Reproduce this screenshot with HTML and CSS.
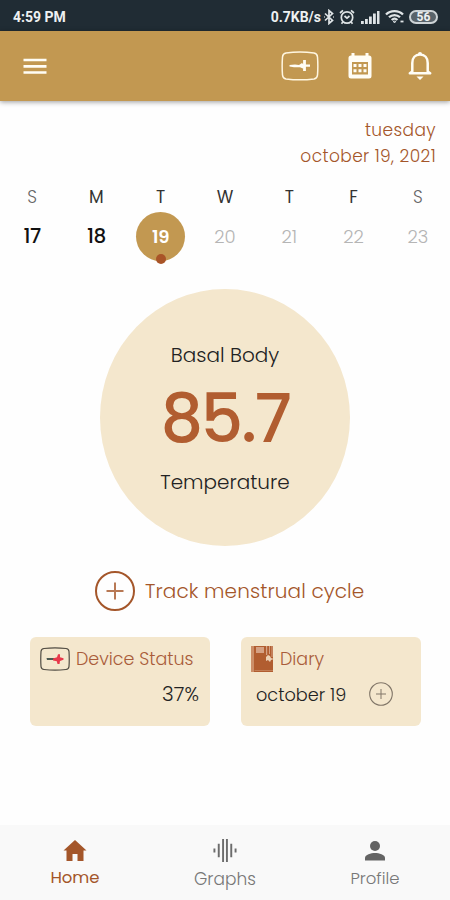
FILE: index.html
```html
<!DOCTYPE html>
<html lang="en">
<head>
    <meta charset="UTF-8">
    <meta name="viewport" content="width=device-width, initial-scale=1.0">
    <title>Basal Body Temperature</title>
    <link rel="stylesheet" href="styles.css">
</head>
<body>
    <!-- Phone status bar -->
    <div class="status-bar">
        <span class="clock">4:59 PM</span>
        <span class="net-speed">0.7KB/s</span>
        <svg class="status-icon" width="12" height="16" viewBox="0 0 12 16" fill="none" stroke="#dfe4e6" stroke-width="1.700"><path d="M2 4.500l7.500 7L6 14.500v-13l3.500 3-7.500 7"/><path d="M1 8h.8M10.200 8h.8"/></svg>
        <svg class="status-icon alarm" width="16" height="16" viewBox="0 0 16 16" fill="none" stroke="#dfe4e6" stroke-width="1.700"><circle cx="8" cy="8.500" r="5.700"/><path d="M1 4l3-2.700M15 4l-3-2.700M5.500 7L8 9.200 10.500 7M3.800 13l-1.300 1.700M12.200 13l1.300 1.700"/></svg>
        <svg class="status-icon signal" width="19" height="14" viewBox="0 0 19 14" fill="#dfe4e6"><path d="M0 11h2.800v3H0zM4 9h2.800v5H4zM8 6.500h2.800V14H8zM12 3.500h2.800V14H12zM16 1h2.500v13H16z"/></svg>
        <svg class="status-icon wifi" width="20" height="15" viewBox="0 0 20 15" fill="none" stroke="#dfe4e6" stroke-width="2.300"><path d="M1 5.500c4.500-4.500 12.500-4.500 17 0M4 8.300c3-3 8-3 11 0M6.700 11c1.700-1.600 4-1.600 5.700 0"/><path d="M8.300 12.200h2.500L9.500 14z" stroke-width="1"/><path d="M15.500 12.500h3" stroke-width="1.800"/></svg>
        <span class="battery">56</span>
    </div>

    <header class="app-bar">
        <svg class="menu-icon" width="24" height="18" viewBox="0 0 24 18" stroke="#fffdf5" stroke-width="2.700"><path d="M.5 3h23M.5 9.300h23M.5 15.500h23"/></svg>
        <div class="actions">
            <svg width="38" height="30" viewBox="0 0 38 30" fill="none"><path d="M5 2Q19 .2 33 2q3.200.5 3.500 4 .7 9 0 18-.3 3.500-3.500 4-14 1.700-28 0-3.200-.5-3.500-4-.7-9 0-18Q1.800 2.500 5 2z" stroke="#fff6e0" stroke-width="1.500"/><path d="M8.500 14l5.500-.5 4 .5 3-2 1.500 1.500H29v2.300h-5.500L22 17.500l-3-1.300h-6l-4.500-.7z" fill="#fffdf5"/><path d="M23.500 9v11" stroke="#fffdf5" stroke-width="2.800"/></svg>
            <svg class="calendar-icon" width="24" height="26" viewBox="0 0 24 26"><path fill="#fffdf5" fill-rule="evenodd" d="M3.500 0h3v2.500h11V0h3v2.500H21a2.500 2.500 0 0 1 2.500 2.500v18a2.500 2.500 0 0 1-2.500 2.500H3A2.500 2.500 0 0 1 .5 23V5A2.500 2.500 0 0 1 3 2.500h.5zM4 9v12.500h16V9z"/><path fill="#fffdf5" d="M5.500 11h3v3h-3zM10.500 11h3v3h-3zM15.500 11h3v3h-3zM5.500 16.300h3v3h-3zM10.500 16.300h3v3h-3zM15.500 16.300h3v3h-3z"/></svg>
            <svg class="bell-icon" width="26" height="30" viewBox="0 0 26 30" fill="none"><path d="M5.300 20.500V12c0-5 3-8.500 7.700-8.500s7.700 3.500 7.700 8.500v8.500l2.500 1.700H2.800z" stroke="#fffdf5" stroke-width="2.500" stroke-linejoin="round"/><path d="M11 3a2 2 0 0 1 4 0zM9.500 25.500h7L13 29z" fill="#fffdf5"/></svg>
        </div>
    </header>

    <main>
        <div class="today">
            <div class="today-day">tuesday</div>
            <div class="today-date">october 19, 2021</div>
        </div>

        <!-- Week strip -->
        <div class="week">
            <div class="day past"><span class="name light">S</span><span class="number">17</span></div>
            <div class="day past"><span class="name">M</span><span class="number">18</span></div>
            <div class="day selected"><span class="name">T</span><span class="number">19</span></div>
            <div class="day"><span class="name">W</span><span class="number">20</span></div>
            <div class="day"><span class="name">T</span><span class="number">21</span></div>
            <div class="day"><span class="name">F</span><span class="number">22</span></div>
            <div class="day"><span class="name light">S</span><span class="number">23</span></div>
        </div>

        <div class="temperature">
            <span class="label-top">Basal Body</span>
            <span class="value">85.7</span>
            <span class="label-bottom">Temperature</span>
        </div>

        <div class="track">
            <svg width="40" height="40" viewBox="0 0 40 40" fill="none"><circle cx="20" cy="20" r="19" stroke="#a4562a" stroke-width="2"/><path d="M20 11.500v17M11.500 20h17" stroke="#b87955" stroke-width="2"/></svg>
            <span class="track-text">Track menstrual cycle</span>
        </div>

        <div class="cards">
            <div class="card">
                <div class="card-title device">
                    <svg width="30" height="24" viewBox="0 0 30 24" fill="none"><path d="M4 1.500q11-1.200 22 0 2.700.3 3 3 .5 7.500 0 15-.3 2.700-3 3-11 1.200-22 0-2.700-.3-3-3-.5-7.500 0-15 .3-2.700 3-3z" stroke="#514c43" stroke-width="1.200"/><path d="M6.500 11h8v2H7z" fill="#4d5a52"/><path d="M13 11.500l4-1.200 1-3h2v3l3.500 1v1.500L20 14l-.5 3h-2l-.7-2.700-3.800-.8z" fill="#e8394b"/></svg>
                    <span>Device Status</span>
                </div>
                <div class="percent">37%</div>
            </div>
            <div class="card">
                <div class="card-title diary">
                    <svg width="24" height="27" viewBox="0 0 24 27"><path fill="#b15d30" d="M1 0h21v26H1z"/><path fill="#cc8e68" d="M0 0h3v26H0z"/><path fill="#d5a184" d="M5 1h8v6H5zM15 0h1.200v9H15zM18 0h1v8h-1zM20.500 0h1v11h-1z"/><path fill="#ecd0b4" d="M15 11l2-2 2 1 1 2 3 1-3 1-1 2-2-2-2 1z"/><path d="M3.500 24.500H22" stroke="#cc8e68" stroke-width=".7"/></svg>
                    <span>Diary</span>
                </div>
                <div class="entry">
                    <span class="entry-date">october 19</span>
                    <svg width="24" height="24" viewBox="0 0 24 24" fill="none" stroke="#817668"><circle cx="12" cy="12" r="11.300" stroke-width="1.100"/><path d="M12 7v10M7 12h10"/></svg>
                </div>
            </div>
        </div>
    </main>

    <nav class="bottom-nav">
        <div class="tab active">
            <svg width="24" height="24" viewBox="0 0 24 24"><path fill="#a4562a" d="M12 1.500L.5 12h3v10.500h6v-7h5v7h6V12h3z"/></svg>
            <span class="tab-home">Home</span>
        </div>
        <div class="tab">
            <svg width="24" height="26" viewBox="0 0 24 26" fill="none" stroke="#6c6c6c" stroke-width="2"><path d="M1 11v4M5.500 6v14M10 1v24M14 1v24M18.500 6v14M23 11v4"/></svg>
            <span class="tab-graphs">Graphs</span>
        </div>
        <div class="tab">
            <svg width="22" height="22" viewBox="0 0 22 22" fill="#646464"><circle cx="11" cy="6.500" r="5"/><path d="M1 21v-2.500c0-3.300 6-5 10-5s10 1.700 10 5V21z"/></svg>
            <span class="tab-profile">Profile</span>
        </div>
    </nav>
</body>
</html>
```

FILE: styles.css
```css
* {
    box-sizing: border-box;
}

body {
    margin: 0;
    height: 900px;
    display: flex;
    flex-direction: column;
    background: #fefefe;
    font-family: Poppins, Inter, sans-serif;
    font-feature-settings: "cv11";
    font-weight: 300;
    color: #222;
    white-space: nowrap;
}

svg {
    display: block;
    flex: none;
}

.status-bar {
    height: 31px;
    padding: 2px 12px 0 13px;
    display: flex;
    align-items: center;
    background: #202c34;
    color: #eef1f2;
    font-family: Roboto, sans-serif;
    font-size: 14px;
    font-weight: 700;
}

.net-speed {
    margin-left: auto;
    margin-right: 2px;
}

.alarm {
    margin-left: 4px;
}

.signal {
    margin-left: 6px;
}

.wifi {
    margin-left: 5px;
}

.battery {
    width: 29px;
    height: 14px;
    margin-left: 4px;
    border: 2px solid #cdd3d6;
    border-radius: 7px;
    background: #59636a;
    font-size: 12px;
    line-height: 10px;
    text-align: center;
}

.app-bar {
    height: 70px;
    padding: 0 17px 0 23px;
    display: flex;
    align-items: center;
    justify-content: space-between;
    background: #c29851;
    box-shadow: 0 1px 5px rgba(0, 0, 0, 0.4);
}

.actions {
    display: flex;
    align-items: center;
}

.calendar-icon {
    margin-left: 29px;
}

.bell-icon {
    margin-left: 35px;
}

main {
    flex: 1;
    display: flex;
    flex-direction: column;
}

.today {
    padding: 16px 14px 0 0;
    color: #a4562a;
    font-size: 17px;
    letter-spacing: 0.4px;
    line-height: 26px;
    text-align: right;
}

.week {
    margin-top: 16px;
    display: grid;
    grid-template-columns: repeat(7, 1fr);
}

.day {
    display: flex;
    flex-direction: column;
    align-items: center;
}

.name {
    font-size: 17px;
    line-height: 25px;
    font-weight: 400;
    color: #333;
}

.name.light {
    color: #666;
    font-weight: 300;
}

.number {
    width: 49px;
    height: 49px;
    margin-top: 2px;
    border-radius: 50%;
    color: #b5b5b5;
    font-size: 18px;
    line-height: 49px;
    text-align: center;
}

.past .number {
    color: #111;
    font-size: 20px;
    font-weight: 500;
    letter-spacing: -0.5px;
}

.selected .number {
    position: relative;
    background: #c29851;
    color: #fff;
    font-weight: 600;
    letter-spacing: -0.3px;
}

/* marker under the selected day */
.selected .number::after {
    content: "";
    position: absolute;
    left: 20px;
    bottom: -3px;
    width: 10px;
    height: 10px;
    border-radius: 50%;
    background: #a95427;
}

.temperature {
    width: 250px;
    height: 257px;
    margin: 28px auto 0;
    padding-top: 51px;
    display: flex;
    flex-direction: column;
    align-items: center;
    border-radius: 50%;
    background: #f4e7cd;
    font-size: 20px;
    line-height: 30px;
}

.value {
    color: #b15d30;
    font-size: 67px;
    font-weight: 500;
    letter-spacing: -2.5px;
    line-height: 97px;
}

.track {
    margin: 25px 0 0 95px;
    display: flex;
    align-items: center;
    gap: 10px;
    color: #a4562a;
    font-size: 20px;
    letter-spacing: 0.1px;
}

.cards {
    margin-top: 26px;
    padding-left: 30px;
    display: flex;
    gap: 31px;
}

.card {
    width: 180px;
    height: 89px;
    padding: 9px 10px 0 10px;
    border-radius: 6px;
    background: #f4e7cd;
}

.card-title {
    height: 26px;
    display: flex;
    align-items: center;
    gap: 6px;
    color: #a95c3a;
    font-size: 17.5px;
}

.card-title.diary {
    gap: 5px;
}

.percent {
    margin-top: 9px;
    padding-right: 1px;
    font-size: 20px;
    line-height: 26px;
    text-align: right;
}

.entry {
    height: 24px;
    margin-top: 10px;
    padding: 0 18px 0 5px;
    display: flex;
    align-items: center;
    justify-content: space-between;
    font-size: 17.7px;
}

.bottom-nav {
    height: 75px;
    display: grid;
    grid-template-columns: repeat(3, 1fr);
    background: #f9f9f9;
    color: #777;
    font-size: 17px;
}

.tab {
    padding-top: 13px;
    display: flex;
    flex-direction: column;
    align-items: center;
}

.tab svg {
    height: 25px;
}

.tab span {
    margin-top: 4px;
    line-height: 24px;
}

.tab.active {
    color: #a4562a;
}

.tab .tab-home {
    margin-top: 3px;
    font-weight: 400;
    font-size: 16.5px;
}

.tab .tab-profile {
    font-size: 16.5px;
}
```
